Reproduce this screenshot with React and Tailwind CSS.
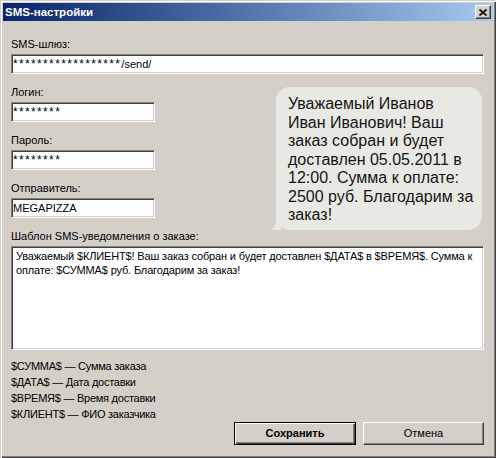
const sunken =
  'bg-white border border-t-[#808080] border-l-[#808080] border-b-white border-r-white shadow-[inset_1px_1px_0_#404040,inset_-1px_-1px_0_#d4d0c8]';

function Stars({ n }) {
  return <span className="text-[12px] tracking-[1.35px]">{'*'.repeat(n)}</span>;
}

function Field({ label, children, wide }) {
  return (
    <div className="flex flex-col">
      <div className="h-[13px] text-[11px] leading-[13px] whitespace-nowrap">{label}</div>
      <div
        className={`${sunken} mt-[3px] h-[20px] pl-[1px] flex items-center text-[11px] leading-[13px] whitespace-nowrap ${
          wide ? 'w-full' : 'w-[144px]'
        }`}
      >
        {children}
      </div>
    </div>
  );
}

function Bubble() {
  return (
    <div className="relative mt-[1px] mb-[-12px] mr-[2px] w-[206px] h-[143px]">
      <svg className="absolute left-[-5px] bottom-0" width="16" height="16" viewBox="0 0 16 16">
        <path d="M5 0 L10 0 L10 16 L3 16 Q1 16 0 15.5 Q4 13 5 8 Z" fill="#e9e9e4" />
      </svg>
      <div className="relative h-full rounded-[14px] bg-[#e9e9e4] pl-[12px] pt-[8px] text-[16px] leading-[18.5px] text-[#151515] whitespace-nowrap">
        Уважаемый Иванов
        <br />
        Иван Иванович! Ваш
        <br />
        заказ собран и будет
        <br />
        доставлен 05.05.2011 в
        <br />
        12:00. Сумма к оплате:
        <br />
        2500 руб. Благодарим за
        <br />
        заказ!
      </div>
    </div>
  );
}

export default function App() {
  return (
    <div className="w-[496px] h-[458px] bg-[#d4d0c8] p-[3px] flex flex-col text-black font-['Liberation_Sans',Arial,sans-serif] shadow-[inset_1px_1px_0_#d4d0c8,inset_2px_2px_0_#ffffff,inset_-1px_-1px_0_#404040,inset_-2px_-2px_0_#808080]">
      {/* title bar */}
      <div className="h-[18px] flex items-center justify-between bg-gradient-to-r from-[#0a246a] to-[#a6caf0]">
        <span className="pl-[2px] text-[11.5px] font-bold text-white leading-[13px]">SMS-настройки</span>
        <div className="mr-[2px] w-[16px] h-[14px] bg-[#d4d0c8] flex items-center justify-center border border-t-white border-l-white border-r-[#404040] border-b-[#404040] shadow-[inset_-1px_-1px_0_#808080]">
          <svg width="8" height="7" viewBox="0 0 8 7">
            <path d="M0.5 0.5 L7.5 6.5 M7.5 0.5 L0.5 6.5" stroke="#000" strokeWidth="1.6" />
          </svg>
        </div>
      </div>

      {/* body */}
      <div className="flex-1 flex flex-col pl-[8px] pr-[9px] pt-[17px]">
        <Field label="SMS-шлюз:" wide>
          <Stars n={18} />
          /send/
        </Field>

        <div className="mt-[12px] flex justify-between">
          <div className="flex flex-col gap-[12px]">
            <Field label="Логин:">
              <Stars n={8} />
            </Field>
            <Field label="Пароль:">
              <Stars n={8} />
            </Field>
            <Field label="Отправитель:">MEGAPIZZA</Field>
          </div>
          <Bubble />
        </div>

        <div className="mt-[12px] h-[13px] text-[11px] leading-[13px]">Шаблон SMS-уведомления о заказе:</div>
        <div className={`${sunken} mt-[3px] h-[104px] pl-[4px] pr-[4px] pt-[2px] text-[11px] leading-[14px] tracking-[-0.15px] whitespace-nowrap`}>
          Уважаемый $КЛИЕНТ$! Ваш заказ собран и будет доставлен $ДАТА$ в $ВРЕМЯ$. Сумма к
          <br />
          оплате: $СУММА$ руб. Благодарим за заказ!
        </div>

        <div className="mt-[8px] flex flex-col text-[11px] leading-[16px] tracking-[-0.25px]">
          <div>$СУММА$ — Сумма заказа</div>
          <div>$ДАТА$ — Дата доставки</div>
          <div>$ВРЕМЯ$ — Время доставки</div>
          <div>$КЛИЕНТ$ — ФИО заказчика</div>
        </div>

        <div className="flex justify-end gap-[7px]">
          <button className="w-[122px] h-[23px] bg-[#d4d0c8] border border-black shadow-[inset_1px_1px_0_#ffffff,inset_-1px_-1px_0_#404040,inset_-2px_-2px_0_#808080] text-[11px] font-bold">
            Сохранить
          </button>
          <button className="w-[121px] h-[23px] bg-[#d4d0c8] border border-t-white border-l-white border-r-[#404040] border-b-[#404040] shadow-[inset_-1px_-1px_0_#808080] text-[11px]">
            Отмена
          </button>
        </div>
      </div>
    </div>
  );
}
